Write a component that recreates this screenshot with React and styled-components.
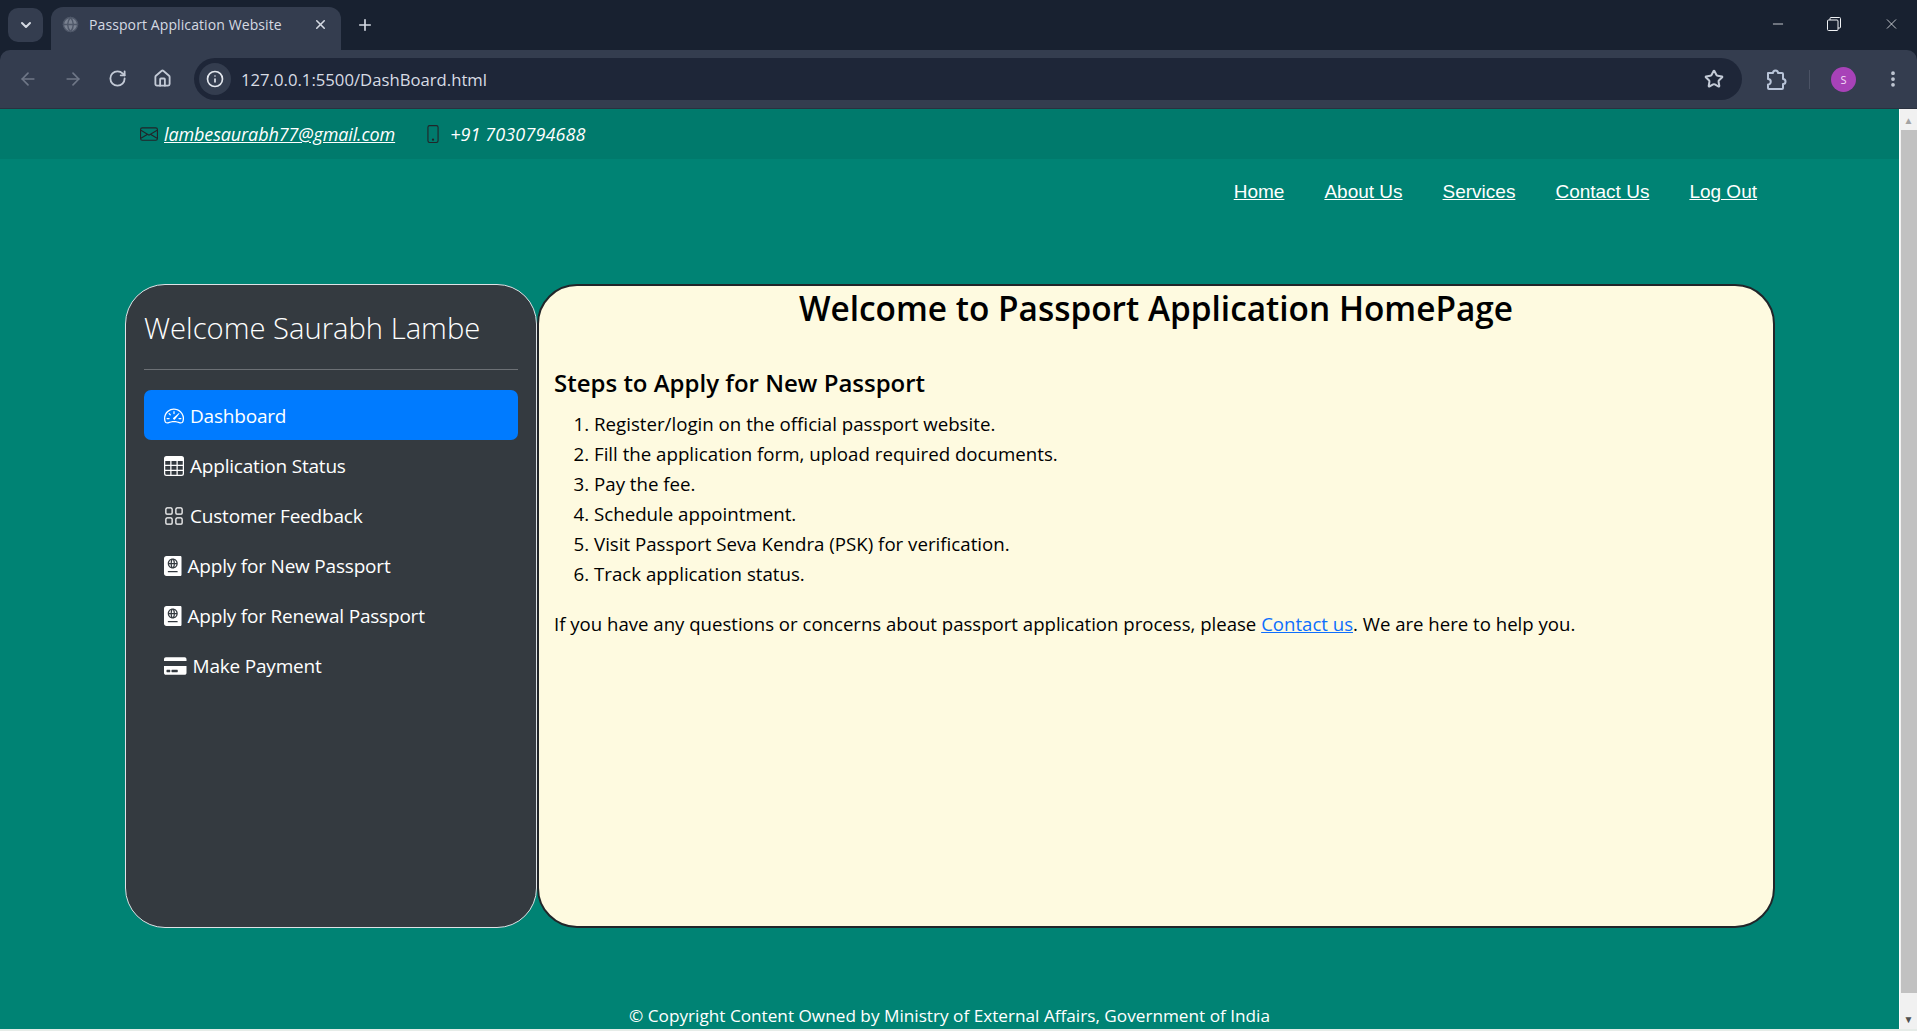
import React from 'react';
import styled, { createGlobalStyle } from 'styled-components';
import { ArrowLeft, ArrowRight, RotateCw, Home, Info, Star, EllipsisVertical, Minus, X, Plus, ChevronDown, Globe } from 'lucide-react';
import { BsSpeedometer2, BsTable, BsGrid, BsEnvelope, BsPhone } from 'react-icons/bs';
import { FaPassport, FaCreditCard } from 'react-icons/fa';

const GlobalStyle = createGlobalStyle`
    html, body {
        margin: 0;
        height: 100%;
        overflow: hidden;
        font-family: "Open Sans", "Liberation Sans", sans-serif;
    }
`;

const Window = styled.div`
    height: 100vh;
    display: flex;
    flex-direction: column;
    background: #182130;
`;

const TabStrip = styled.div`
    height: 50px;
    flex: none;
    display: flex;
    align-items: flex-end;
    padding-left: 8px;
    color: #d5dae3;
`;

const TabMenu = styled.div`
    width: 35px;
    height: 34px;
    margin-bottom: 8px;
    border-radius: 10px;
    background: #343d4f;
    display: flex;
    align-items: center;
    justify-content: center;
`;

const Tab = styled.div`
    width: 290px;
    height: 43px;
    margin-left: 8px;
    box-sizing: border-box;
    padding: 0 13px 9px 11px;
    border-radius: 12px 12px 0 0;
    background: #343d4f;
    display: flex;
    align-items: center;
    gap: 10px;
    font-size: 14px;
`;

const TabTitle = styled.span`
    flex: 1;
    letter-spacing: 0.1px;
`;

const NewTab = styled.div`
    margin: 0 0 13px 15px;
    height: 24px;
    display: flex;
    align-items: center;
`;

const WindowControls = styled.div`
    margin-left: auto;
    height: 100%;
    display: flex;
    align-items: center;
    gap: 39px;
    padding-right: 17px;
    padding-bottom: 2px;
    box-sizing: border-box;
    color: #f0f2f5;
`;

const ControlIcon = styled.div`
    width: 17px;
    height: 17px;
    display: flex;
    align-items: center;
    justify-content: center;
    &:last-child {
        margin-left: 2px;
    }
`;

const Toolbar = styled.div`
    height: 59px;
    flex: none;
    box-sizing: border-box;
    background: #343d4f;
    border-bottom: 1px solid #2a313f;
    border-radius: 10px 10px 0 0;
    display: flex;
    align-items: center;
    color: #c3cad6;
`;

const NavButton = styled.div`
    width: 45px;
    flex: none;
    display: flex;
    justify-content: center;
    color: ${props => props.$off ? '#6f7787' : '#c3cad6'};
`;

const NavButtons = styled.div`
    display: flex;
    padding-left: 5px;
    margin-right: 9px;
`;

const Omnibox = styled.div`
    width: 1548px;
    height: 42px;
    border-radius: 21px;
    background: #1e2638;
    display: flex;
    align-items: center;
    box-sizing: border-box;
    padding: 0 18px 0 5px;
`;

const InfoBadge = styled.div`
    width: 32px;
    height: 32px;
    border-radius: 50%;
    background: #343d4f;
    display: flex;
    align-items: center;
    justify-content: center;
    color: #e3e7ee;
`;

const Url = styled.span`
    flex: 1;
    margin-left: 10px;
    color: #d8dce4;
    font-size: 16.7px;
`;

const ToolbarEnd = styled.div`
    flex: 1;
    display: flex;
    align-items: center;
    padding-left: 24px;
`;

const Divider = styled.div`
    width: 1px;
    height: 19px;
    margin: 0 21px 0 22px;
    background: #4b5365;
`;

const Avatar = styled.div`
    width: 25px;
    height: 25px;
    border-radius: 50%;
    background: #a842b8;
    color: #f3dff6;
    font-size: 11px;
    display: flex;
    align-items: center;
    justify-content: center;
`;

const MenuDots = styled.div`
    margin-left: 27px;
    display: flex;
`;

const Viewport = styled.div`
    flex: 1;
    min-height: 0;
    display: flex;
    border-bottom: 2px solid #e6ece8;
`;

const Page = styled.div`
    flex: 1;
    min-width: 0;
    background: #008374;
    color: #fff;
    overflow: hidden;
`;

const Scrollbar = styled.div`
    width: 18px;
    flex: none;
    display: flex;
    flex-direction: column;
    background: #f1f1f1;
    border-left: 1px solid #fff;
    box-sizing: border-box;
`;

const ScrollArrow = styled.div`
    height: 21px;
    flex: none;
    display: flex;
    align-items: center;
    justify-content: center;
    color: ${props => props.$down ? '#505050' : '#a3a3a3'};
    margin-top: ${props => props.$down ? 'auto' : '0'};
    font-size: 10px;
    line-height: 1;
`;

const ScrollThumb = styled.div`
    height: 863px;
    margin-left: 1px;
    background: #c1c1c1;
`;

const ContactBar = styled.div`
    height: 50px;
    background: #007a6c;
    display: flex;
    align-items: center;
    padding-left: 140px;
    font-style: italic;
    font-size: 18px;
    letter-spacing: -0.12px;
`;

const ContactItem = styled.span`
    display: flex;
    align-items: center;
    margin-right: ${props => props.$gap}px;
    gap: ${props => props.$inner}px;
    svg {
        color: #212529;
    }
`;

const PhoneNumber = styled.span`
    letter-spacing: 0.1px;
`;

const WhiteLink = styled.a`
    color: #fff;
    text-decoration: underline;
`;

const TopNav = styled.nav`
    height: 66px;
    display: flex;
    justify-content: flex-end;
    align-items: center;
    gap: 40px;
    padding-right: 142px;
    font-family: "Liberation Sans", Arial, sans-serif;
    font-size: 19px;
`;

const Main = styled.main`
    display: flex;
    height: 644px;
    margin: 59px 124px 0 125px;
`;

const Sidebar = styled.aside`
    width: 412px;
    flex: none;
    box-sizing: border-box;
    background: #343a40;
    border: 1px solid #dee2e6;
    border-radius: 40px;
    padding: 23px 18px;
`;

const SideTitle = styled.div`
    font-size: 29.2px;
    line-height: 40px;
    font-weight: 300;
`;

const Rule = styled.hr`
    border: 0;
    border-top: 1px solid #6c7075;
    margin: 21px 0 20px;
`;

const SideItem = styled.a`
    height: 50px;
    display: flex;
    align-items: center;
    box-sizing: border-box;
    padding: 2px 0 0 20px;
    gap: 6px;
    border-radius: 7px;
    font-size: 19px;
    color: #fff;
    background: ${props => props.$active ? '#007bff' : 'transparent'};
    letter-spacing: -0.2px;
    svg {
        height: 20px;
        width: ${props => props.$iconWidth}px;
        flex: none;
    }
`;

const Content = styled.section`
    flex: 1;
    box-sizing: border-box;
    background: #fefae0;
    border: 2px solid #212529;
    border-radius: 40px;
    padding: 0 15px;
    color: #000;
`;

const Title = styled.h1`
    margin: 0;
    text-align: center;
    font-size: 33.4px;
    line-height: 44px;
    font-weight: 600;
`;

const Subtitle = styled.h2`
    margin: 35px 0 0;
    font-size: 24px;
    line-height: 36px;
    font-weight: 600;
`;

const Steps = styled.ol`
    margin: 8px 0 0;
    padding-left: 40px;
    font-size: 18.7px;
    line-height: 30px;
`;

const Note = styled.p`
    margin: 20px 0 0;
    font-size: 18.6px;
    line-height: 30px;
`;

const BlueLink = styled.a`
    color: #0d6efd;
    text-decoration: underline;
`;

const Footer = styled.footer`
    margin-top: 76px;
    text-align: center;
    font-size: 17.2px;
    line-height: 24px;
`;

const RestoreIcon = () => (
    <svg width="14" height="14" viewBox="0 0 14 14" fill="none" stroke="currentColor" strokeWidth="1">
        <rect x="0.5" y="3" width="10.5" height="10.5" rx="1" />
        <path d="M3 3V1.5a1 1 0 0 1 1-1h8.5a1 1 0 0 1 1 1V10a1 1 0 0 1-1 1H11" />
    </svg>
);

const PuzzleIcon = () => (
    <svg width="21" height="21" viewBox="0 0 21 21" fill="none" stroke="#b8c4d8" strokeWidth="2" strokeLinejoin="round">
        <path d="M2 4h5a2.5 2.5 0 0 1 5 0h4a1 1 0 0 1 1 1v5a2.5 2.5 0 0 1 0 5v4a1 1 0 0 1-1 1H3a1 1 0 0 1-1-1v-3.5a2.75 2.75 0 0 0 0-5.5V4z" />
    </svg>
);

const sideItems = [
    { label: 'Dashboard', Icon: BsSpeedometer2, iconWidth: 20, active: true },
    { label: 'Application Status', Icon: BsTable, iconWidth: 20 },
    { label: 'Customer Feedback', Icon: BsGrid, iconWidth: 20 },
    { label: 'Apply for New Passport', Icon: FaPassport, iconWidth: 17.5 },
    { label: 'Apply for Renewal Passport', Icon: FaPassport, iconWidth: 17.5 },
    { label: 'Make Payment', Icon: FaCreditCard, iconWidth: 22.5 },
];

const steps = [
    'Register/login on the official passport website.',
    'Fill the application form, upload required documents.',
    'Pay the fee.',
    'Schedule appointment.',
    'Visit Passport Seva Kendra (PSK) for verification.',
    'Track application status.',
];

export default function App() {
    return (
        <Window>
            <GlobalStyle />
            <TabStrip>
                <TabMenu><ChevronDown size={16} strokeWidth={3} /></TabMenu>
                <Tab>
                    <Globe size={17} color="#4f5869" fill="#7a8291" />
                    <TabTitle>Passport Application Website</TabTitle>
                    <X size={15} strokeWidth={2.5} />
                </Tab>
                <NewTab><Plus size={18} strokeWidth={2.2} /></NewTab>
                <WindowControls>
                    <ControlIcon><Minus size={16} strokeWidth={1.2} /></ControlIcon>
                    <ControlIcon><RestoreIcon /></ControlIcon>
                    <ControlIcon><X size={18} strokeWidth={1.1} /></ControlIcon>
                </WindowControls>
            </TabStrip>
            <Toolbar>
                <NavButtons>
                    <NavButton $off><ArrowLeft size={20} /></NavButton>
                    <NavButton $off><ArrowRight size={20} /></NavButton>
                    <NavButton><RotateCw size={19} strokeWidth={2.3} /></NavButton>
                    <NavButton><Home size={19} strokeWidth={2.3} /></NavButton>
                </NavButtons>
                <Omnibox>
                    <InfoBadge><Info size={18} strokeWidth={2.2} /></InfoBadge>
                    <Url>127.0.0.1:5500/DashBoard.html</Url>
                    <Star size={20} strokeWidth={2.4} />
                </Omnibox>
                <ToolbarEnd>
                    <PuzzleIcon />
                    <Divider />
                    <Avatar>S</Avatar>
                    <MenuDots><EllipsisVertical size={20} strokeWidth={2.5} /></MenuDots>
                </ToolbarEnd>
            </Toolbar>
            <Viewport>
                <Page>
                    <ContactBar>
                        <ContactItem $gap={29} $inner={6}>
                            <BsEnvelope size={18} />
                            <WhiteLink href="#">lambesaurabh77@gmail.com</WhiteLink>
                        </ContactItem>
                        <ContactItem $inner={8}>
                            <BsPhone size={18} />
                            <PhoneNumber>+91 7030794688</PhoneNumber>
                        </ContactItem>
                    </ContactBar>
                    <TopNav>
                        <WhiteLink href="#">Home</WhiteLink>
                        <WhiteLink href="#">About Us</WhiteLink>
                        <WhiteLink href="#">Services</WhiteLink>
                        <WhiteLink href="#">Contact Us</WhiteLink>
                        <WhiteLink href="#">Log Out</WhiteLink>
                    </TopNav>
                    <Main>
                        <Sidebar>
                            <SideTitle>Welcome Saurabh Lambe</SideTitle>
                            <Rule />
                            {sideItems.map(({ label, Icon, iconWidth, active }) => (
                                <SideItem key={label} $active={active} $iconWidth={iconWidth}>
                                    <Icon />
                                    {label}
                                </SideItem>
                            ))}
                        </Sidebar>
                        <Content>
                            <Title>Welcome to Passport Application HomePage</Title>
                            <Subtitle>Steps to Apply for New Passport</Subtitle>
                            <Steps>
                                {steps.map(step => <li key={step}>{step}</li>)}
                            </Steps>
                            <Note>
                                If you have any questions or concerns about passport application process, please <BlueLink href="#">Contact us</BlueLink>. We are here to help you.
                            </Note>
                        </Content>
                    </Main>
                    <Footer>© Copyright Content Owned by Ministry of External Affairs, Government of India</Footer>
                </Page>
                <Scrollbar>
                    <ScrollArrow>▲</ScrollArrow>
                    <ScrollThumb />
                    <ScrollArrow $down>▼</ScrollArrow>
                </Scrollbar>
            </Viewport>
        </Window>
    );
}
